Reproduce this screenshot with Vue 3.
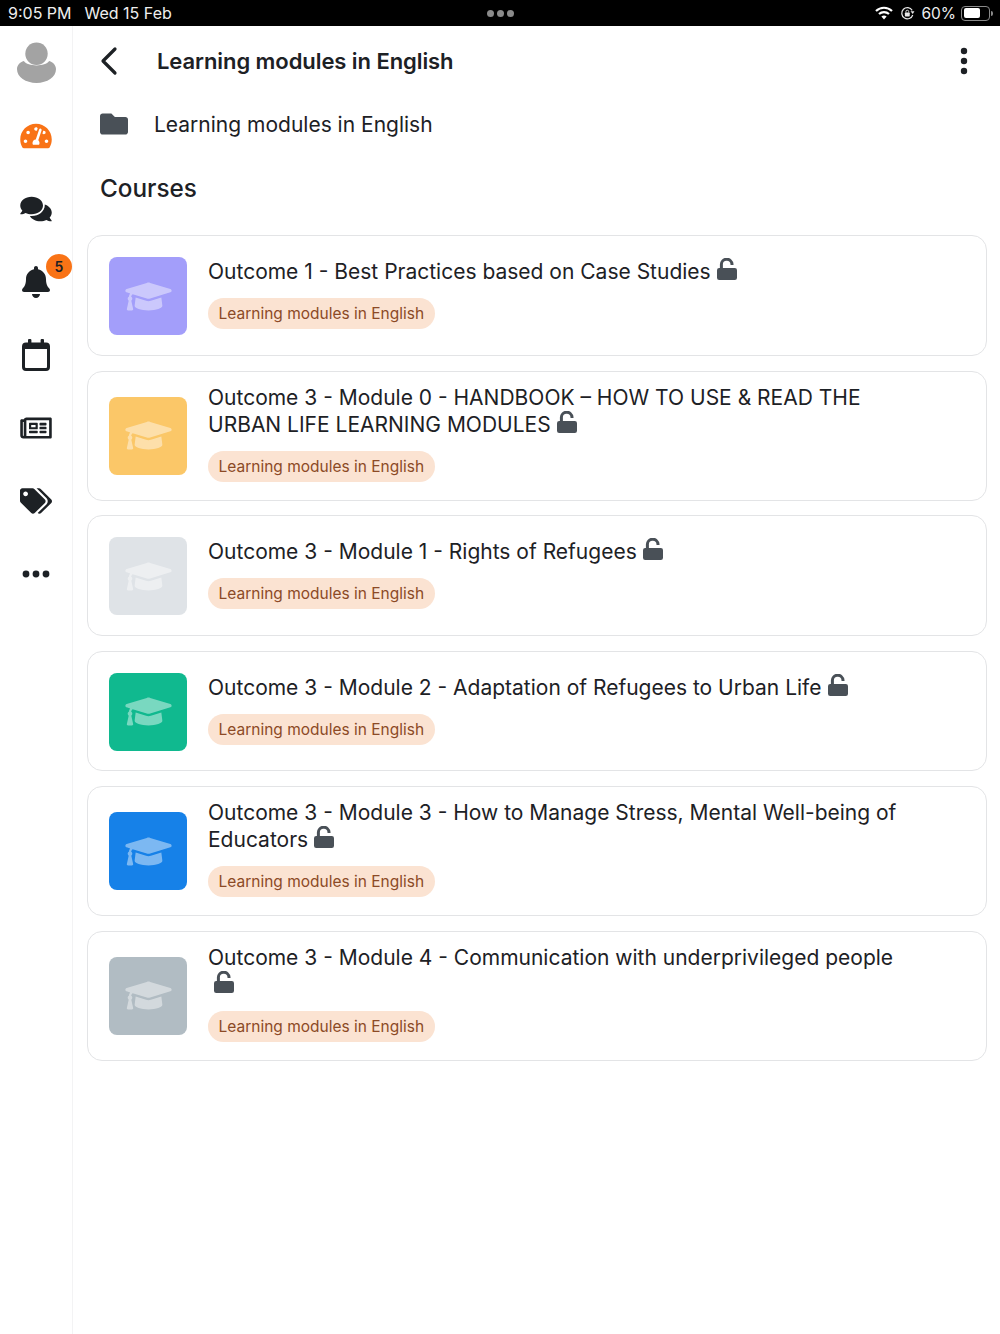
<script setup>
const courses = [
  { title: 'Outcome 1 - Best Practices based on Case Studies', color: '#a39efa', single: true },
  { title: 'Outcome 3 - Module 0 - HANDBOOK – HOW TO USE & READ THE URBAN LIFE LEARNING MODULES', color: '#fbc768' },
  { title: 'Outcome 3 - Module 1 - Rights of Refugees', color: '#dfe3e7', single: true },
  { title: 'Outcome 3 - Module 2 - Adaptation of Refugees to Urban Life', color: '#10b98f', single: true },
  { title: 'Outcome 3 - Module 3 - How to Manage Stress, Mental Well-being of Educators', color: '#1681e8' },
  { title: 'Outcome 3 - Module 4 - Communication with underprivileged people', color: '#b1bcc3' }
]
</script>

<template>
  <div class="screen">
    <header class="status">
      <div class="status-left"><span>9:05 PM</span><span>Wed 15 Feb</span></div>
      <div class="status-dots"><i></i><i></i><i></i></div>
      <div class="status-right">
        <svg class="wifi" viewBox="0 0 18 14" width="18" height="14">
          <path d="M1 5 A11.5 11.5 0 0 1 17 5" fill="none" stroke="#fff" stroke-width="2.2"/>
          <path d="M4 8 A7.4 7.4 0 0 1 14 8" fill="none" stroke="#fff" stroke-width="2.2"/>
          <path d="M9 13.5 L6.4 10.6 A3.8 3.8 0 0 1 11.6 10.6 Z" fill="#fff"/>
        </svg>
        <svg class="rot" viewBox="0 0 16 16" width="15" height="15">
          <path d="M13.6 9.6 A6 6 0 1 1 13 4.6" fill="none" stroke="#e8e8e8" stroke-width="1.3"/>
          <path d="M15.4 5.6 H11.2 L13.6 8.6 Z" fill="#e8e8e8"/>
          <rect x="5.2" y="7" width="5.2" height="4.2" rx=".7" fill="#e8e8e8"/>
          <path d="M6.3 7 V6 A1.5 1.5 0 0 1 9.3 6 V7" fill="none" stroke="#e8e8e8"/>
        </svg>
        <span class="pct">60%</span>
        <span class="battery"><b></b></span>
        <span class="nub"></span>
      </div>
    </header>

    <div class="body">
      <nav class="rail">
        <div class="rail-item">
          <svg viewBox="0 0 40 42" width="39" height="41">
            <circle cx="20" cy="12" r="11.5" fill="#a3a3a3"/>
            <path d="M7 19.5 C11 25.5 29 25.5 33 19.5 C37 20.5 40 24 40 28 C40 36 31 42 20 42 C9 42 0 36 0 28 C0 24 3 20.5 7 19.5 Z" fill="#a3a3a3"/>
          </svg>
        </div>
        <div class="rail-item">
          <svg viewBox="0 0 576 512" width="32" height="28" fill="#f97316"><path d="M288 32C128.94 32 0 160.94 0 320c0 52.8 14.25 102.26 39.06 144.8 5.61 9.62 16.3 15.2 27.44 15.2h443c11.14 0 21.83-5.58 27.44-15.2C561.75 422.26 576 372.8 576 320c0-159.06-128.94-288-288-288zm0 64c14.71 0 26.58 10.13 30.32 23.65-1.11 2.26-2.64 4.23-3.45 6.67l-9.22 27.67c-5.13 3.49-10.97 6.01-17.64 6.01-17.67 0-32-14.33-32-32S270.33 96 288 96zM96 384c-17.67 0-32-14.33-32-32s14.33-32 32-32 32 14.33 32 32-14.33 32-32 32zm48-160c-17.67 0-32-14.33-32-32s14.33-32 32-32 32 14.33 32 32-14.33 32-32 32zm246.77-72.41l-61.33 184C343.13 347.33 352 364.54 352 384c0 11.72-3.38 22.55-8.88 32H232.88c-5.5-9.45-8.88-20.28-8.88-32 0-33.94 26.5-61.43 59.9-63.59l61.34-184.01c4.17-12.56 17.73-19.45 30.36-15.17 12.57 4.19 19.35 17.77 15.17 30.36zm14.66 57.2l15.52-46.55c3.47-1.29 7.13-2.23 11.05-2.23 17.67 0 32 14.33 32 32s-14.33 32-32 32c-11.38-.01-20.89-6.28-26.57-15.22zM480 384c-17.67 0-32-14.33-32-32s14.33-32 32-32 32 14.33 32 32-14.33 32-32 32z"/></svg>
        </div>
        <div class="rail-item">
          <svg viewBox="0 0 576 512" width="32" height="28" fill="#1d2125"><path d="M416 192c0-88.4-93.1-160-208-160S0 103.6 0 192c0 34.3 14.1 65.9 38 92-13.4 30.2-35.5 54.2-35.8 54.5-2.2 2.3-2.8 5.7-1.5 8.7S4.8 352 8 352c36.6 0 66.9-12.3 88.7-25 32.2 15.7 70.3 25 111.3 25 114.9 0 208-71.6 208-160zm122 220c23.9-26 38-57.7 38-92 0-66.9-53.5-124.2-129.3-148.1.9 6.6 1.3 13.3 1.3 20.1 0 105.9-107.7 192-240 192-10.8 0-21.3-.8-31.7-1.9C207.8 439.6 281.8 480 368 480c41 0 79.1-9.2 111.3-25 21.8 12.7 52.1 25 88.7 25 3.2 0 6.1-1.9 7.3-4.8 1.3-2.9.7-6.3-1.5-8.7-.3-.3-22.4-24.2-35.8-54.5z"/></svg>
        </div>
        <div class="rail-item">
          <svg viewBox="0 0 448 512" width="28" height="32" fill="#1d2125"><path d="M224 512c35.32 0 63.97-28.65 63.97-64H160.03c0 35.35 28.65 64 63.97 64zm215.39-149.71c-19.32-20.76-55.47-51.99-55.47-154.29 0-77.7-54.48-139.9-127.94-155.16V32c0-17.67-14.32-32-31.98-32s-31.98 14.33-31.98 32v20.84C118.56 68.1 64.08 130.3 64.08 208c0 102.3-36.15 133.53-55.47 154.29-6 6.45-8.66 14.16-8.61 21.71.11 16.4 12.98 32 32.1 32h383.8c19.12 0 32-15.6 32.1-32 .05-7.55-2.61-15.27-8.61-21.71z"/></svg>
          <span class="badge-count">5</span>
        </div>
        <div class="rail-item">
          <svg viewBox="0 0 28 32" width="28" height="32">
            <rect x="1.5" y="5" width="25" height="25.5" rx="2.5" fill="none" stroke="#1d2125" stroke-width="3"/>
            <rect x="1.5" y="5" width="25" height="5" fill="#1d2125"/>
            <rect x="6" y="0" width="3.4" height="7" rx="1" fill="#1d2125"/>
            <rect x="18.6" y="0" width="3.4" height="7" rx="1" fill="#1d2125"/>
          </svg>
        </div>
        <div class="rail-item">
          <svg viewBox="0 0 576 512" width="32" height="28" fill="#1d2125"><path d="M552 64H112c-20.858 0-38.643 13.377-45.248 32H24c-13.255 0-24 10.745-24 24v272c0 30.928 25.072 56 56 56h496c13.255 0 24-10.745 24-24V88c0-13.255-10.745-24-24-24zM48 392V144h16v248c0 4.411-3.589 8-8 8s-8-3.589-8-8zm480 8H111.422c.374-2.614.578-5.283.578-8V112h416v288zM172 280h136c6.627 0 12-5.373 12-12v-96c0-6.627-5.373-12-12-12H172c-6.627 0-12 5.373-12 12v96c0 6.627 5.373 12 12 12zm28-80h80v40h-80v-40zm-40 140v-24c0-6.627 5.373-12 12-12h136c6.627 0 12 5.373 12 12v24c0 6.627-5.373 12-12 12H172c-6.627 0-12-5.373-12-12zm192 0v-24c0-6.627 5.373-12 12-12h104c6.627 0 12 5.373 12 12v24c0 6.627-5.373 12-12 12H364c-6.627 0-12-5.373-12-12zm0-144v-24c0-6.627 5.373-12 12-12h104c6.627 0 12 5.373 12 12v24c0 6.627-5.373 12-12 12H364c-6.627 0-12-5.373-12-12zm0 72v-24c0-6.627 5.373-12 12-12h104c6.627 0 12 5.373 12 12v24c0 6.627-5.373 12-12 12H364c-6.627 0-12-5.373-12-12z"/></svg>
        </div>
        <div class="rail-item">
          <svg viewBox="0 0 640 512" width="32" height="26" fill="#1d2125"><path d="M497.941 225.941L286.059 14.059A48 48 0 0 0 252.118 0H48C21.49 0 0 21.49 0 48v204.118a48 48 0 0 0 14.059 33.941l211.882 211.882c18.744 18.745 49.136 18.746 67.882 0l204.118-204.118c18.745-18.745 18.745-49.137 0-67.882zM112 160c-26.51 0-48-21.49-48-48s21.49-48 48-48 48 21.49 48 48-21.49 48-48 48zm513.941 133.823L421.823 497.941c-18.745 18.745-49.137 18.745-67.882 0l-.36-.36L527.64 323.522c16.999-16.999 26.36-39.6 26.36-63.64s-9.362-46.641-26.36-63.64L331.397 0h48.721a48 48 0 0 1 33.941 14.059l211.882 211.882c18.745 18.745 18.745 49.137 0 67.882z"/></svg>
        </div>
        <div class="rail-item">
          <svg viewBox="0 0 28 8" width="28" height="8" fill="#1d2125"><circle cx="4" cy="4" r="3.4"/><circle cx="14" cy="4" r="3.4"/><circle cx="24" cy="4" r="3.4"/></svg>
        </div>
      </nav>

      <main class="main">
        <div class="topbar">
          <svg class="back" viewBox="0 0 20 30" width="20" height="30"><path d="M16 3 L4 15 L16 27" fill="none" stroke="#1d2125" stroke-width="3.2" stroke-linecap="round" stroke-linejoin="round"/></svg>
          <h1>Learning modules in English</h1>
          <svg class="more" viewBox="0 0 8 28" width="8" height="28" fill="#1d2125"><circle cx="4" cy="4" r="3.2"/><circle cx="4" cy="14" r="3.2"/><circle cx="4" cy="24" r="3.2"/></svg>
        </div>

        <div class="crumb">
          <svg viewBox="0 0 512 512" width="28" height="28" fill="#495057"><path d="M464 128H272l-64-64H48C21.49 64 0 85.49 0 112v288c0 26.51 21.49 48 48 48h416c26.51 0 48-21.49 48-48V176c0-26.51-21.49-48-48-48z"/></svg>
          <span>Learning modules in English</span>
        </div>

        <h2>Courses</h2>

        <ul class="list">
          <li v-for="c in courses" :key="c.title" class="card" :class="{ single: c.single }">
            <div class="thumb" :style="{ background: c.color }">
              <svg viewBox="0 0 640 512" width="47" height="37" fill="#fff" fill-opacity=".44"><path d="M622.34 153.2L343.4 67.5c-15.2-4.67-31.6-4.67-46.79 0L17.66 153.2c-23.54 7.23-23.54 38.36 0 45.59l48.63 14.94c-10.67 13.19-17.23 29.28-17.88 46.9C38.78 266.15 32 276.11 32 288c0 10.78 5.68 19.85 13.86 25.65L20.33 428.53C18.11 438.52 25.71 448 35.94 448h56.11c10.24 0 17.84-9.48 15.62-19.47L82.14 313.65C90.32 307.85 96 298.78 96 288c0-11.57-6.47-21.25-15.66-26.87.76-15.02 8.44-28.3 20.69-36.72L296.6 284.5c9.06 2.78 26.44 6.25 46.79 0l278.95-85.7c23.55-7.24 23.55-38.36 0-45.6zM352.79 315.09c-28.53 8.76-52.84 3.92-65.59 0l-145.02-44.55L128 384c0 35.35 85.96 64 192 64s192-28.65 192-64l-14.18-113.47-145.03 44.56z"/></svg>
            </div>
            <div class="info">
              <div class="title">{{ c.title }}<svg class="lock" viewBox="0 0 20 22" width="20" height="22"><rect x="0" y="10" width="20" height="12" rx="2.2" fill="#495057"/><path d="M4.4 11 V6.8 A5.3 5.3 0 0 1 15 6.2 V7" fill="none" stroke="#495057" stroke-width="3"/></svg></div>
              <span class="tag">Learning modules in English</span>
            </div>
          </li>
        </ul>
      </main>
    </div>
  </div>
</template>

<style scoped>
.screen {
  width: 1000px;
  height: 1334px;
  display: flex;
  flex-direction: column;
  background: #fff;
  color: #1d2125;
  font-family: Inter, "Liberation Sans", sans-serif;
  overflow: hidden;
}
.status {
  height: 26px;
  background: #000;
  color: #eee;
  display: flex;
  align-items: center;
  justify-content: space-between;
  position: relative;
  font-size: 16px;
  flex: none;
}
.status-left {
  display: flex;
  gap: 13px;
  padding-left: 8px;
}
.status-dots {
  position: absolute;
  left: 487px;
  top: 10px;
  display: flex;
  gap: 3px;
}
.status-dots i {
  width: 7px;
  height: 7px;
  border-radius: 50%;
  background: #8a8a8a;
}
.status-right {
  display: flex;
  align-items: center;
  padding-right: 7px;
}
.rot { margin-left: 7px; }
.pct { margin-left: 6px; font-size: 15.5px; }
.battery {
  margin-left: 5px;
  width: 29px;
  height: 15px;
  box-sizing: border-box;
  border: 1px solid #8a8a8a;
  border-radius: 4px;
  padding: 1.5px;
  display: flex;
}
.battery b {
  width: 16px;
  background: #fff;
  border-radius: 2px;
}
.nub {
  width: 2px;
  height: 5px;
  margin-left: 1px;
  background: #8a8a8a;
  border-radius: 0 2px 2px 0;
}
.body {
  flex: 1;
  display: flex;
  min-height: 0;
}
.rail {
  width: 73px;
  box-sizing: border-box;
  border-right: 1.5px solid #f3f3f4;
  flex: none;
  display: flex;
  flex-direction: column;
}
.rail-item {
  height: 73px;
  flex: none;
  display: flex;
  align-items: center;
  justify-content: center;
  position: relative;
}
.badge-count {
  position: absolute;
  left: 46px;
  top: 9px;
  width: 26px;
  height: 25px;
  border-radius: 50%;
  background: #f97316;
  color: #1d2125;
  font-size: 14px;
  font-weight: 600;
  display: flex;
  align-items: center;
  justify-content: center;
}
.main {
  flex: 1;
  min-width: 0;
  padding: 0 13px 0 14px;
}
.topbar {
  height: 70px;
  display: flex;
  align-items: center;
  padding-left: 12px;
  padding-right: 19px;
}
.back { flex: none; }
.topbar h1 {
  flex: 1;
  margin: 0 0 0 38px;
  font-size: 22px;
  font-weight: 600;
  letter-spacing: -0.07px;
}
.more { flex: none; }
.crumb {
  height: 56px;
  display: flex;
  align-items: center;
  gap: 26px;
  padding-left: 13px;
  font-size: 21px;
}
.main h2 {
  margin: 9px 0 20.4px 13px;
  height: 54px;
  line-height: 54px;
  font-size: 24.3px;
  font-weight: 500;
}
.list {
  list-style: none;
  margin: 0;
  padding: 0;
  display: flex;
  flex-direction: column;
  gap: 14.8px;
}
.card {
  box-sizing: border-box;
  width: 900px;
  padding: 12px 76px 12px 21px;
  border: 1px solid #e3e4e6;
  border-radius: 15px;
  display: flex;
  align-items: center;
  gap: 21px;
}
.thumb {
  width: 78px;
  height: 78px;
  margin: 8.25px 0;
  border-radius: 8px;
  flex: none;
  display: flex;
  align-items: center;
  justify-content: center;
}
.single .thumb {
  margin: 9px 0 7.5px;
}
.info {
  flex: 1;
  min-width: 0;
  padding-bottom: 6px;
}
.single .info {
  padding-top: 2.5px;
}
.title {
  font-size: 21px;
  line-height: 27px;
  margin-bottom: 13px;
}
.lock {
  margin: -6px 0 -6px 6px;
  vertical-align: 5px;
}
.tag {
  display: block;
  width: fit-content;
  height: 31px;
  line-height: 31px;
  padding: 0 10.5px;
  border-radius: 16px;
  background: #fbe3d2;
  color: #8c4a26;
  font-size: 15.5px;
}
</style>

<style>
html, body { background: #fff; }
</style>
